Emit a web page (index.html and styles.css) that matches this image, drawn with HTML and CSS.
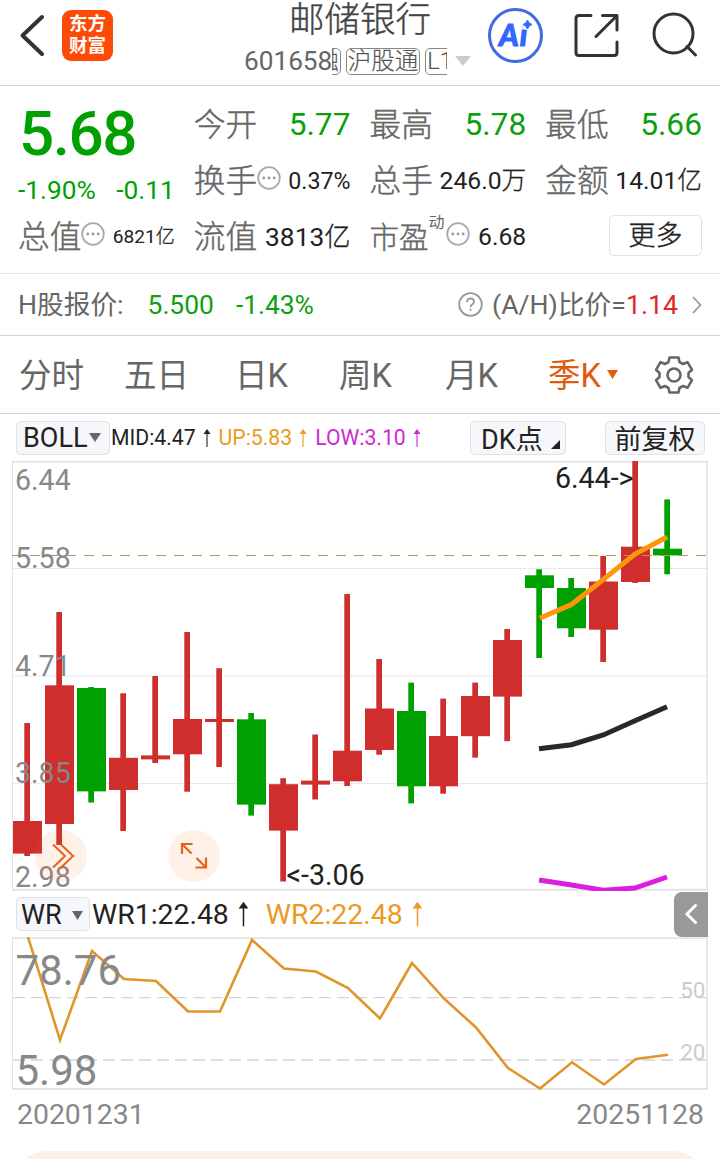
FILE: index.html
```html
<!DOCTYPE html>
<html lang="zh-CN">
  <head>
    <meta charset="utf-8">
    <title>邮储银行 601658</title>
    <link rel="stylesheet" href="styles.css">
  </head>
  <body>
    <header class="topbar">
      <svg class="back" width="28" height="44" viewBox="18 14 28 44"><path d="M42 17 22.5 35.500 42 54" fill="none" stroke="#333" stroke-width="4" stroke-linecap="round" stroke-linejoin="round"/></svg>
      <div class="logo">东方<br>财富</div>
      <div class="stock">
        <div class="name">邮储银行</div>
        <div class="code">
          <span>601658</span>
          <div class="tags"><span class="tag first">融</span><span class="tag">沪股通</span><span class="tag">L1</span></div>
          <svg width="16" height="10" viewBox="0 0 16 10"><path d="M0 0h16L8 10z" fill="#ccc"/></svg>
        </div>
      </div>
      <svg class="icons" width="214" height="56" viewBox="486 8 214 56">
        <g fill="none" stroke="#333" stroke-width="3" stroke-linecap="round" stroke-linejoin="round">
          <circle cx="515.5" cy="35.5" r="26" stroke="#3f6be6"/>
          <path d="M591 15.500H579q-3 0-3 3V52.500q0 3 3 3h35q3 0 3-3V42M596 36.500 616 16.500M602.500 15.500H617V30"/>
          <circle cx="673.500" cy="33.500" r="19.500"/>
          <path d="M687 46.500l8.500 8.500"/>
        </g>
        <text class="ai" x="499" y="45.500">Ai</text>
        <circle cx="527.500" cy="24" r="6" fill="#fff"/>
        <path d="M527.500 20q1 3.500 4.500 4.500-3.500 1-4.500 4.500-1-3.500-4.500-4.500 3.500-1 4.500-4.500z" fill="#3366ff" stroke="#3366ff"/>
      </svg>
    </header>

    <section class="quote">
      <div class="price">
        <div class="last">5.68</div>
        <div class="change"><span>-1.90%</span><span>-0.11</span></div>
      </div>
      <div class="item"><label>今开</label><b class="big down">5.77</b></div>
      <div class="item"><label>最高</label><b class="big down">5.78</b></div>
      <div class="item"><label>最低</label><b class="big down">5.66</b></div>
      <div class="item"><label>换手</label><svg class="dots" viewBox="0 0 24 24"><use href="#more"/></svg><b class="s22">0.37%</b></div>
      <div class="item"><label>总手</label><b>246.0<span>万</span></b></div>
      <div class="item"><label>金额</label><b>14.01<span>亿</span></b></div>
      <div class="item"><label>总值</label><svg class="dots" viewBox="0 0 24 24"><use href="#more"/></svg><b class="s19">6821<span>亿</span></b></div>
      <div class="item"><label>流值</label><b class="s26">3813<span>亿</span></b></div>
      <div class="item pe"><label>市盈</label><sup>动</sup><svg class="dots" viewBox="0 0 24 24"><use href="#more"/></svg><b class="s25">6.68</b></div>
      <div class="item"><button class="more">更多</button></div>
    </section>

    <section class="hshare">
      <span>H股报价:</span>
      <span class="down hprice">5.500</span>
      <span class="down hchange">-1.43%</span>
      <svg width="25" height="25" viewBox="0 0 25 25"><g fill="none" stroke="#999" stroke-width="1.800"><circle cx="12.500" cy="12.500" r="11.300"/><path d="M9 10.200q0-3.700 3.600-3.700 3.400 0 3.400 3.100 0 1.700-1.800 2.800-1.700 1-1.700 2.900"/><path d="M12.500 16.800v2"/></g></svg>
      <span class="ratio">(A/H)比价=<i>1.14</i></span>
      <svg width="10" height="18" viewBox="0 0 10 18"><path d="M1 1l7.500 8L1 17" fill="none" stroke="#999" stroke-width="1.800"/></svg>
    </section>

    <nav class="tabs">
      <a>分时</a><a>五日</a><a>日K</a><a>周K</a><a>月K</a>
      <a class="active">季K<svg width="11" height="9" viewBox="0 0 11 9"><path d="M0 0h11L5.500 9z" fill="#e3590e"/></svg></a>
      <svg width="40" height="40" viewBox="-20 -20 40 40"><g fill="none" stroke="#666" stroke-width="2.600" stroke-linejoin="round"><circle r="6.500"/><path d="M-4.500-17.500h9l1 4.500 3.500 2 4.500-1.800 4.500 7.600-3.500 3.200v4l3.500 3.200-4.500 7.600L9 11l-3.500 2-1 4.500h-9l-1-4.500L-9 11l-4.500 1.800L-18 5.200l3.500-3.200v-4L-18-5.200l4.500-7.600L-9-11l3.500-2z"/></g></svg>
    </nav>

    <div class="toolbar">
      <button class="boll">BOLL<svg width="12" height="9" viewBox="0 0 12 9"><path d="M0 0h12L6 9z" fill="#666"/></svg></button>
      <span class="mid">MID:4.47</span><svg class="arrow mid" viewBox="0 0 8 18"><use href="#up"/></svg>
      <span class="up">UP:5.83</span><svg class="arrow up" viewBox="0 0 8 18"><use href="#up"/></svg>
      <span class="low">LOW:3.10</span><svg class="arrow low" viewBox="0 0 8 18"><use href="#up"/></svg>
      <button class="dk">DK点<svg width="9" height="9" viewBox="0 0 9 9"><path d="M9 0v9H0z" fill="#222"/></svg></button>
      <button class="adjust">前复权</button>
    </div>

    <svg class="chart" width="720" height="430" viewBox="0 461 720 430">
      <g fill="none" stroke="#e4e4e4">
        <path d="M12 461.500H708M12 889.700H708" stroke-width="2"/>
        <path d="M12.500 461V890"/>
        <path d="M707 461V890" stroke-width="1.600"/>
        <path d="M13 568.500H706M13 676H706M13 783.500H706" stroke="#d4d4d4" stroke-dasharray="1.300 1.300"/>
      </g>
      <g id="candles"></g>
      <path d="M12 555.500H706" stroke="#bb9450" stroke-dasharray="10 8"/>
      <g fill="none" stroke-width="5">
        <path d="M540 618 571.500 604.500 603.300 579.500 635 554 667 537" stroke="#ff960a"/>
        <path d="M539 748.800 571.500 744.700 603.300 735 635 720.700 667 706.700" stroke="#282828"/>
        <path d="M539 880 571.500 885 603.300 890.200 635 888 667 877" stroke="#dc1ee0"/>
      </g>
      <g class="axis">
        <text x="15" y="490">6.44</text>
        <text x="15" y="568">5.58</text>
        <text x="15" y="676">4.71</text>
        <text x="15" y="783">3.85</text>
        <text x="15" y="887">2.98</text>
      </g>
      <text class="peak" x="633.500" y="488" text-anchor="end">6.44-&gt;</text>
      <text class="peak" x="286.500" y="885">&lt;-3.06</text>
      <g fill="#fd6a1c" fill-opacity=".1">
        <circle cx="61" cy="856" r="26"/>
        <circle cx="194" cy="856" r="26"/>
      </g>
      <g fill="none" stroke="#e3651c" stroke-width="2">
        <path d="M53 844.500 65 856 53 867.500M61 844.500 73 856 61 867.500"/>
        <path d="M182 854v-10h10.500M182.500 844.500l9 9M206 857.500v10h-10.500M205.500 867l-9-9" stroke-width="2.200"/>
      </g>
    </svg>

    <div class="wrbar">
      <button class="wr">WR<svg width="11" height="9" viewBox="0 0 11 9"><path d="M0 0h11L5.500 9z" fill="#666"/></svg></button>
      <span class="mid">WR1:22.48</span><svg class="arrow mid" viewBox="0 0 8 18"><use href="#up"/></svg>
      <span class="up">WR2:22.48</span><svg class="arrow up" viewBox="0 0 8 18"><use href="#up"/></svg>
      <button class="fold"><svg width="14" height="22" viewBox="0 0 14 22"><path d="M11.500 2.500 3 11l8.500 8.500" fill="none" stroke="#fff" stroke-width="3" stroke-linecap="round"/></svg></button>
    </div>

    <svg class="chart" width="720" height="153" viewBox="0 937 720 153">
      <g fill="none" stroke="#e4e4e4">
        <path d="M12 938.200H708M12 1089H708" stroke-width="1.800"/>
        <path d="M12.500 938V1089"/>
        <path d="M707 938V1089" stroke-width="1.600"/>
        <path d="M13 997.600H706M13 1060H706" stroke="#d4d4d4" stroke-width="1.300" stroke-dasharray="12 6"/>
      </g>
      <g class="axis level" text-anchor="end">
        <text x="705.500" y="998">50</text>
        <text x="705.500" y="1060">20</text>
      </g>
      <path id="wr" fill="none" stroke="#e0952a" stroke-width="2.600"/>
      <g class="axis large">
        <text x="15.500" y="985">78.76</text>
        <text x="15.500" y="1084.700">5.98</text>
      </g>
    </svg>

    <div class="dates"><span>20201231</span><span>20251128</span></div>
    <div class="panel"></div>

    <svg width="0" height="0" class="defs">
      <symbol id="more" viewBox="0 0 24 24"><circle cx="12" cy="12" r="10.800" fill="none" stroke="#aaa" stroke-width="1.800"/><g fill="#999"><circle cx="6.800" cy="12" r="1.400"/><circle cx="12" cy="12" r="1.400"/><circle cx="17.200" cy="12" r="1.400"/></g></symbol>
      <symbol id="up" viewBox="0 0 8 18"><path d="M4 18V2M1.500 4.500 4 1 6.500 4.500z" fill="currentColor" stroke="currentColor" stroke-width="1.100"/></symbol>
    </svg>

    <script>
      // high, body top, body bottom, low, 1 = rising
      var candles = [
        [723, 821, 853.6, 856, 1],
        [612, 685.3, 824, 845, 1],
        [687, 688, 791.4, 802.5, 0],
        [693.3, 757.8, 790, 831, 1],
        [676, 755.4, 759.4, 763, 1],
        [632, 719, 754.3, 791.7, 1],
        [668.2, 719, 722, 767, 1],
        [713, 719.3, 804.6, 815.6, 0],
        [778.2, 784.2, 830.6, 881.5, 1],
        [734.5, 780.6, 784.6, 799.5, 1],
        [594, 750.7, 781.3, 786, 1],
        [659, 708.5, 750, 754.7, 1],
        [682.6, 711, 786.3, 803.4, 0],
        [698.6, 736, 786.3, 793.7, 1],
        [682.6, 696, 736.2, 757.6, 1],
        [629, 640, 696.6, 741.2, 1],
        [569.3, 575.3, 588, 658, 0],
        [578, 588, 628.3, 637, 0],
        [556, 581.5, 629.7, 662, 1],
        [461, 546.7, 582, 583, 1],
        [499.4, 548.7, 555.4, 574.3, 0]
      ];
      var html = "";
      candles.forEach(function(c, i) {
        var x = 13 + i * 32;
        html += '<g fill="' + (c[4] ? "#d02d2d" : "#00a000") + '">' +
          '<rect x="' + (x + 11.3) + '" y="' + c[0] + '" width="5.700" height="' + (c[3] - c[0]) + '"/>' +
          '<rect x="' + x + '" y="' + c[1] + '" width="29" height="' + (c[2] - c[1]) + '"/></g>';
      });
      document.getElementById("candles").innerHTML = html;

      // WR line, one value per candle
      var wr = [937, 1040, 951, 979, 981, 1011.5, 1011.5, 940, 968.5, 971.5, 988, 1018.5, 963, 998.5, 1027.5, 1068, 1088.5, 1062.3, 1084.5, 1059, 1054.7];
      document.getElementById("wr").setAttribute("d", "M" + wr.map(function(y, i) {
        return (28 + i * 32) + " " + y;
      }).join("L"));
    </script>
  </body>
</html>
```
FILE: styles.css
```css
* {
  box-sizing: border-box;
}
body {
  margin: 0;
  width: 720px;
  height: 1159px;
  overflow: hidden;
  background: #fff;
  color: #666;
  font-family: Roboto, "Noto Sans CJK SC", sans-serif;
}
svg {
  display: block;
  flex: none;
}
button {
  font: inherit;
  color: #222;
  padding: 0;
  background: #f6f7fa;
  border: 1px solid #dfe1e6;
  border-radius: 5px;
  display: flex;
  align-items: center;
}
.defs {
  position: absolute;
}
.down {
  color: #0d9f0d;
}

/* header */
.topbar {
  height: 86px;
  border-bottom: 1px solid #d4d4d4;
  display: flex;
  align-items: flex-start;
}
.back {
  margin: 14px 0 0 18px;
}
.logo {
  width: 51px;
  height: 51px;
  margin: 10px 0 0 16px;
  border-radius: 9px;
  background: #fd4a06;
  color: #fff;
  font-size: 18.5px;
  font-weight: 700;
  line-height: 21.5px;
  padding-top: 4px;
  text-align: center;
}
.stock {
  margin-left: 131px;
  width: 242px;
}
.name {
  font-size: 35.5px;
  line-height: 40px;
  padding-left: 45px;
  color: #444;
  font-weight: 300;
  -webkit-text-stroke: .4px;
}
.code {
  display: flex;
  align-items: center;
  height: 32px;
  margin-top: 5px;
  font-size: 26.2px;
  line-height: 32px;
}
.tags {
  display: flex;
  width: 115px;
  margin-right: 8px;
  gap: 5px;
  overflow: hidden;
}
.tag {
  flex: none;
  height: 27px;
  border: 1px solid #888;
  border-radius: 5px;
  padding: 0 1px;
  font-size: 23.5px;
  line-height: 25px;
  font-weight: 300;
  color: #555;
  -webkit-text-stroke: .2px;
}
.first {
  margin-left: -19px;
}
.icons {
  margin: 8px 0 0;
}
.ai {
  font: italic 900 30px Lato, sans-serif;
  fill: #3366ff;
  stroke: #3366ff;
  letter-spacing: 1px;
}

/* quote grid */
.quote {
  height: 188px;
  padding: 11px 18px 0;
  border-bottom: 1px solid #e8e8e8;
  display: grid;
  grid-template-columns: repeat(4, 1fr);
  grid-template-rows: repeat(3, 56px);
  column-gap: 19px;
}
.price {
  grid-row: span 2;
  color: #00a000;
}
.last {
  font-size: 62px;
  font-weight: 500;
  line-height: 74px;
  padding-left: 1px;
  letter-spacing: -1.5px;
}
.change {
  display: flex;
  justify-content: space-between;
  font-size: 26.3px;
  line-height: 38px;
}
.item {
  display: flex;
  align-items: center;
  line-height: 40px;
  white-space: nowrap;
}
.item label {
  margin-top: 2px;
  font-size: 31.7px;
  font-weight: 300;
  -webkit-text-stroke: .4px;
}
.item b {
  margin-left: auto;
  color: #222;
  font-size: 24.7px;
  font-weight: 400;
}
.item b span {
  font-weight: 300;
  -webkit-text-stroke: .3px;
}
.item .big {
  font-size: 31.7px;
  color: #0d9f0d;
}
.item .s19 { font-size: 19.1px; }
.item .s22 { font-size: 23.2px; }
.item .s25 { font-size: 24.7px; }
.item .s26 { font-size: 26.3px; }
.dots {
  width: 24px;
  height: 24px;
  margin-top: -6px;
}
.pe label {
  font-size: 29.5px;
}
.pe sup {
  font-size: 16px;
  line-height: 16px;
  margin-top: -28px;
  margin-right: 1px;
}
.more {
  width: 93px;
  height: 41px;
  margin: -4px 0 0 auto;
  padding-top: 2px;
  justify-content: center;
  background: #fff;
  font-size: 27px;
  font-weight: 300;
  -webkit-text-stroke: .4px;
}

/* H share line */
.hshare {
  height: 62px;
  padding: 0 18px;
  border-bottom: 1px solid #d4d4d4;
  display: flex;
  align-items: center;
  font-size: 26.7px;
  line-height: 40px;
}
.hprice {
  margin-left: 24px;
  font-size: 26.4px;
}
.hchange {
  margin: 0 auto 0 22px;
  font-size: 26.4px;
}
.ratio {
  margin: 0 14px 0 9px;
}
.ratio i {
  font-style: normal;
  color: #e02828;
}

/* period tabs */
.tabs {
  height: 78px;
  padding: 2px 0 0 19px;
  border-bottom: 1px solid #d4d4d4;
  display: grid;
  grid-template-columns: 105px 111px 104px 106px 103px 106px 40px;
  align-items: center;
  font-size: 32.5px;
  line-height: 44px;
}
.tabs > svg {
  margin-top: -2px;
}
.tabs .active {
  color: #e3590e;
  display: flex;
  align-items: center;
  gap: 6px;
}
.active svg {
  margin-top: -3px;
}

/* indicator rows */
.toolbar,
.wrbar {
  height: 47px;
  padding-left: 16px;
  display: flex;
  align-items: center;
  font-size: 21.2px;
}
.toolbar button,
.wr {
  height: 34px;
  font-size: 27px;
}
.toolbar .boll {
  width: 94px;
  padding-left: 6px;
  gap: 2px;
  margin-right: 1px;
  font-size: 27px;
}
.mid { color: #222; }
.up { color: #eb9a23; }
.low { color: #cc2ad2; }
.arrow {
  width: 8px;
  height: 18px;
  margin: 0 8px 0 7px;
}
.toolbar .dk {
  width: 96px;
  padding-left: 10px;
  gap: 8px;
  margin-left: auto;
}
.dk svg {
  margin-top: 14px;
}
.toolbar .adjust {
  width: 100px;
  margin: 0 15px 0 39px;
  justify-content: center;
}
.wrbar {
  height: 46px;
  font-size: 28.4px;
}
.wr {
  width: 74px;
  padding: 2px 0 0 4px;
  gap: 10px;
  margin-right: 2px;
}
.wrbar .arrow {
  width: 11px;
  height: 26px;
  margin: 0 17px 0 9px;
}
.wrbar .fold {
  width: 34px;
  height: 45px;
  margin: 0 12px 0 auto;
  padding-left: 10px;
  border: 0;
  border-radius: 8px 0 0 8px;
  background: #999;
}

/* charts */
.axis {
  font-size: 28.6px;
  fill: #888;
}
.large {
  font-size: 42px;
}
.level {
  font-size: 22.5px;
  fill: #ccc;
}
.peak {
  font-size: 28.6px;
  fill: #222;
}
.dates {
  display: flex;
  justify-content: space-between;
  padding: 0 16px 0 17px;
  height: 61px;
  font-size: 28.4px;
  line-height: 49px;
  color: #888;
}
.panel {
  height: 72px;
  margin: 0 12px;
  border-radius: 36px;
  background: #fdeee6;
}
```
